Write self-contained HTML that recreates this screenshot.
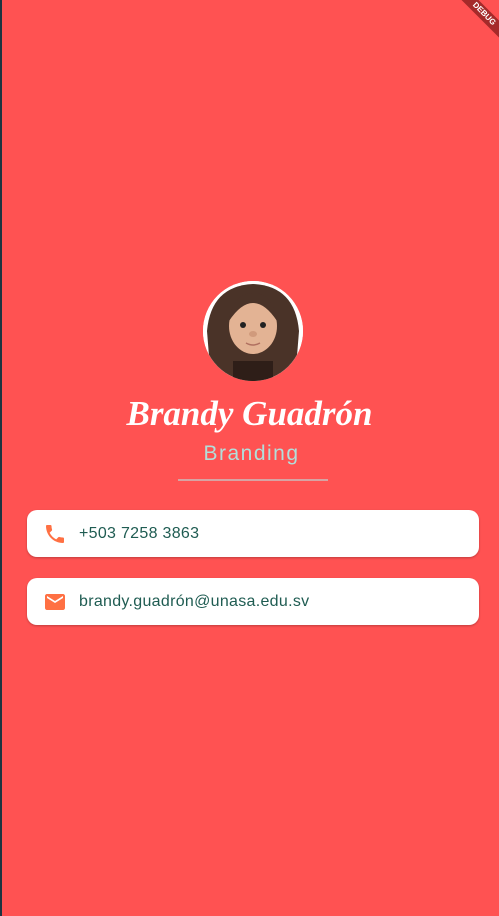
<!DOCTYPE html>
<html><head><meta charset="utf-8"><style>
html,body{margin:0;padding:0;}
body{width:499px;height:916px;background:#ff5252;position:relative;overflow:hidden;font-family:"Liberation Sans",sans-serif;}
.edge{position:absolute;left:0;top:0;width:2px;height:916px;background:#1d3440;}
.avatar{position:absolute;left:203px;top:281px;width:100px;height:100px;border-radius:50%;background:#fff;overflow:hidden;}
.name{position:absolute;left:0;width:499px;top:394px;text-align:center;color:#fff;font-family:"Liberation Serif",serif;font-style:italic;font-weight:bold;font-size:35px;}
.role{position:absolute;left:0;width:499px;top:442px;text-align:center;color:#b2dfdb;font-size:21px;letter-spacing:1.5px;padding-left:4px;box-sizing:border-box;}
.line{position:absolute;left:178px;top:479px;width:150px;height:2px;background:#d7a3a3;}
.card{position:absolute;left:27px;width:452px;height:47px;background:#fff;border-radius:10px;box-shadow:0 1px 2px rgba(0,0,0,.25);}
.card span{position:absolute;left:52px;top:15px;font-size:16px;color:#1f5c52;letter-spacing:0.3px;}
.card svg{position:absolute;left:16px;top:12px;}
.debug{position:absolute;right:-30px;top:8px;width:90px;height:12px;background:#a52a2a;transform:rotate(45deg);color:#fff;font-size:8px;font-weight:bold;text-align:center;line-height:12px;}
</style></head><body>
<div class="edge"></div>
<div class="avatar">
<svg width="100" height="100" viewBox="0 0 100 100">
<rect width="100" height="100" fill="#fff"/>
<path d="M8 100 L4 50 Q8 5 50 3 Q92 5 96 50 L92 100Z" fill="#4a3328"/>
<rect x="30" y="80" width="40" height="20" fill="#2e1e18"/>
<ellipse cx="50" cy="45" rx="24" ry="28" fill="#e3b394"/>
<path d="M26 40 Q30 12 50 12 Q70 12 74 40 Q62 22 50 22 Q38 22 26 40Z" fill="#4a3328"/>
<circle cx="40" cy="44" r="3" fill="#222"/><circle cx="60" cy="44" r="3" fill="#222"/>
<ellipse cx="50" cy="53" rx="4" ry="3" fill="#d09a7c"/>
<path d="M43 62 Q50 66 57 62" stroke="#b07060" stroke-width="1.5" fill="none"/>
</svg></div>
<div class="name">Brandy Guadrón</div>
<div class="role">Branding</div>
<div class="line"></div>
<div class="card" style="top:510px">
<svg width="24" height="24" viewBox="0 0 24 24"><path fill="#ff7043" d="M6.62 10.79c1.44 2.830 3.76 5.14 6.59 6.59l2.2-2.2c.27-.27.67-.36 1.020-.24 1.12.37 2.33.57 3.57.57.55 0 1 .45 1 1V20c0 .55-.45 1-1 1-9.39 0-17-7.61-17-17 0-.55.45-1 1-1h3.5c.55 0 1 .45 1 1 0 1.25.2 2.45.57 3.57.11.35.03.74-.25 1.02l-2.2 2.2z"/></svg>
<span>+503 7258 3863</span></div>
<div class="card" style="top:578px">
<svg width="24" height="24" viewBox="0 0 24 24"><path fill="#ff7043" d="M20 4H4c-1.1 0-2 .9-2 2v12c0 1.1.9 2 2 2h16c1.1 0 2-.9 2-2V6c0-1.1-.9-2-2-2zm0 4l-8 5-8-5V6l8 5 8-5v2z"/></svg>
<span>brandy.guadrón@unasa.edu.sv</span></div>
<div class="debug">DEBUG</div>
</body></html>
